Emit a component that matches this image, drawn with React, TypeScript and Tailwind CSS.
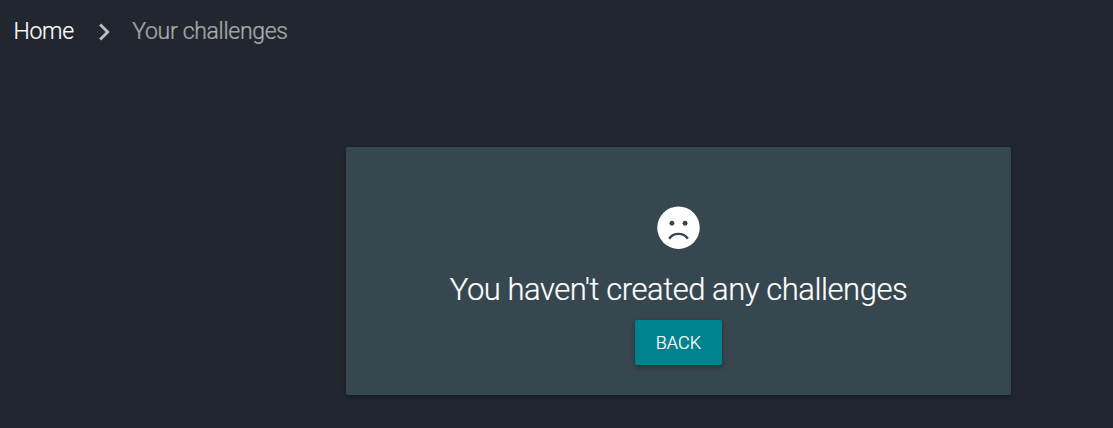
import { MdChevronRight } from "react-icons/md";

export default function App() {
  return (
    <div className="h-[428px] w-[1113px] overflow-hidden bg-[#22272f] font-['Roboto',sans-serif] font-light [-webkit-text-stroke:0.2px]">
      <nav className="flex h-[64px] items-center pl-[13.5px] text-[23px] tracking-[-0.3px]">
        <a className="text-white">Home</a>
        <MdChevronRight className="ml-[13px] mr-[11.500px] size-[34px] text-white/70" />
        <span className="text-white/55">Your challenges</span>
      </nav>
      <main className="ml-[346px] mt-[83px] flex h-[248px] w-[665px] flex-col items-center rounded-[2px] bg-[#37474f] pt-[55px] text-white shadow-[0_2px_4px_rgba(0,0,0,0.3)]">
        <svg viewBox="0 0 24 24" className="size-[51px]">
          <circle cx="12" cy="12.1" r="10" className="fill-white" />
          <circle cx="8.9" cy="10" r="1.15" className="fill-[#37474f]" />
          <circle cx="15.1" cy="10" r="1.15" className="fill-[#37474f]" />
          <path d="M7.600 17.300C8.600 15.800 10.200 15 12 15s3.400.8 4.400 2.300" fill="none" strokeWidth="1.150" className="stroke-[#37474f]" />
        </svg>
        <h1 className="mt-[17px] text-[31px] leading-[40px] tracking-[-0.46px]">You haven't created any challenges</h1>
        <button className="mt-[10px] h-[45px] w-[87px] rounded-[2px] bg-[#00838f] text-[18px] tracking-[0.1px] shadow-[0_2px_4px_rgba(0,0,0,0.35)]">BACK</button>
      </main>
    </div>
  );
}
